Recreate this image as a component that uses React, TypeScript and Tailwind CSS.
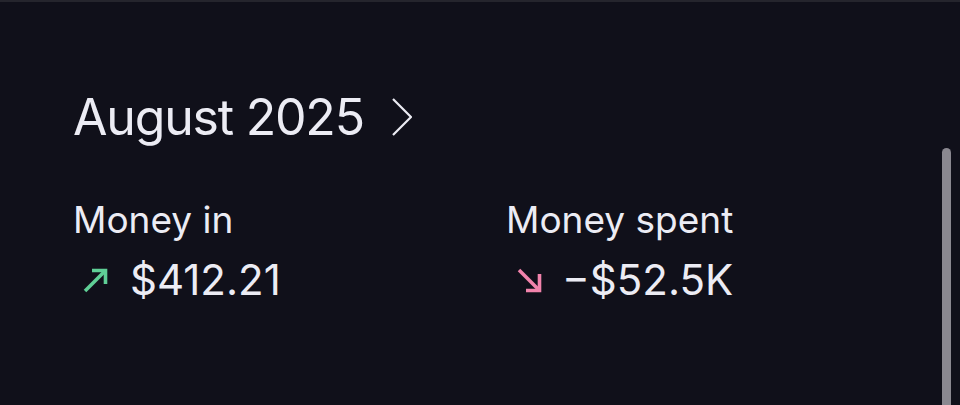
function ArrowUpRight({ className }: { className?: string }) {
  return (
    <svg viewBox="0 0 25 25" className={className} fill="none" stroke="currentColor" strokeWidth={3.6}>
      <path d="M2 23 L22.5 2.5" />
      <path d="M9 2.5 H22.5 V16" />
    </svg>
  );
}

function ArrowDownRight({ className }: { className?: string }) {
  return (
    <svg viewBox="0 0 25 25" className={className} fill="none" stroke="currentColor" strokeWidth={3.6}>
      <path d="M2 2 L22.5 22.5" />
      <path d="M22.5 6 V22.5 H9" />
    </svg>
  );
}

function Chevron() {
  return (
    <svg viewBox="0 0 20 38" className="h-[38px] w-[20px]" fill="none" stroke="currentColor" strokeWidth={2.2}>
      <path d="M1 1 L19 19 L1 37" />
    </svg>
  );
}

export default function App() {
  return (
    <main className="relative h-[405px] w-[960px] overflow-hidden border-t-2 border-[#25252d] bg-[#10101a] text-[#ececf4] font-['Inter',sans-serif]">
      <div className="px-[73px] pt-[85px]">
        <button className="flex items-center gap-[28px]">
          <h1 className="text-[50px] leading-[60px] tracking-[-1.2px]">August 2025</h1>
          <Chevron />
        </button>

        <div className="mt-[51px] flex">
          <div className="w-[433px]">
            <p className="text-[37px] leading-[44px]">Money in</p>
            <div className="mt-[16px] flex items-center gap-[22px] pl-[10px]">
              <ArrowUpRight className="h-[25px] w-[25px] text-[#5fcf96]" />
              <span className="text-[42px] leading-[44px]">$412.21</span>
            </div>
          </div>
          <div>
            <p className="text-[37px] leading-[44px]">Money spent</p>
            <div className="mt-[16px] flex items-center gap-[20px] pl-[11px]">
              <ArrowDownRight className="h-[25px] w-[25px] text-[#f283ac]" />
              <span className="text-[42px] leading-[44px]">−$52.5K</span>
            </div>
          </div>
        </div>
      </div>

      <div className="absolute right-[9px] top-[146px] h-[270px] w-[9px] rounded-full bg-[#8a8890]" />
    </main>
  );
}
